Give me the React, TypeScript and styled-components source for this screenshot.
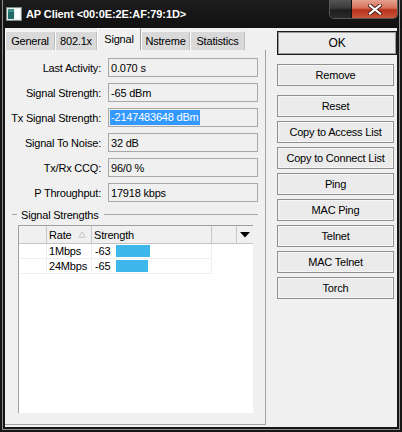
import React from "react";
import styled, { createGlobalStyle } from "styled-components";

const GlobalStyle = createGlobalStyle`
  html, body { margin: 0; padding: 0; background: #151515; }
  body { font-family: "Liberation Sans", Arial, sans-serif; font-size: 11px; color: #000; letter-spacing: -0.2px; }
  * { box-sizing: border-box; }
`;

const Window = styled.div`
  position: relative;
  width: 402px;
  height: 432px;
  background: #161616;
  display: flex;
  flex-direction: column;
  overflow: hidden;
  &::after {
    content: "";
    position: absolute;
    left: 2px;
    right: 2px;
    top: 0;
    bottom: 2px;
    border: 1px solid #8c8c8c;
    border-top: none;
    pointer-events: none;
  }
`;

const TitleBar = styled.div`
  height: 28px;
  flex: none;
  display: flex;
  align-items: flex-start;
  padding: 0 4px 0 6px;
  background: linear-gradient(#1c1c1c, #111111);
`;

const TitleLeft = styled.div`
  height: 28px;
  display: flex;
  align-items: center;
  gap: 4px;
`;

const TitleText = styled.span`
  color: #fff;
  font-weight: bold;
  font-size: 11px;
  letter-spacing: -0.1px;
`;

const Controls = styled.div`
  margin-left: auto;
  width: 69px;
  height: 19px;
  display: flex;
  border: 1px solid #5a5a5a;
  border-top: none;
  border-radius: 0 0 5px 5px;
  overflow: hidden;
`;

const CtrlDark = styled.div`
  width: 22px;
  background: linear-gradient(#555 0%, #3a3a3a 45%, #1e1e1e 55%, #2a2a2a 100%);
  border-right: 1px solid #111;
`;

const CtrlClose = styled.div`
  flex: 1;
  display: flex;
  align-items: center;
  justify-content: center;
  background: linear-gradient(#e6a291 0%, #d5705a 45%, #b8321c 55%, #c9553b 100%);
`;

const Client = styled.div`
  flex: 1;
  min-height: 0;
  margin: 0 5px 5px;
  background: #f0f0f0;
  display: flex;
`;

const LeftCol = styled.div`
  width: 262px;
  display: flex;
  flex-direction: column;
  padding-bottom: 2px;
`;

const TabStrip = styled.div`
  height: 22px;
  flex: none;
  display: flex;
  align-items: flex-end;
`;

const Tab = styled.div<{ $w: number; $active?: boolean }>`
  width: ${(p) => p.$w}px;
  height: ${(p) => (p.$active ? 22 : 19)}px;
  display: flex;
  align-items: center;
  justify-content: center;
  padding-bottom: ${(p) => (p.$active ? 2 : 0)}px;
  background: ${(p) => (p.$active ? "#f0f0f0" : "#d9d9d9")};
  border-top: 1px solid ${(p) => (p.$active ? "#ffffff" : "#f4f4f4")};
  border-left: 1px solid #ffffff;
  border-right: 1px solid ${(p) => (p.$active ? "#a0a0a0" : "#bdbdbd")};
  font-size: 11px;
  white-space: nowrap;
`;

const Panel = styled.div`
  flex: 1;
  display: flex;
  flex-direction: column;
  border-right: 1px solid #a0a0a0;
  border-bottom: 1px solid #a0a0a0;
  padding: 8px 0 11px 0;
  min-height: 0;
`;

const Fields = styled.div`
  display: flex;
  flex-direction: column;
  gap: 6px;
`;

const FieldRow = styled.div`
  display: grid;
  grid-template-columns: 96px 150px;
  column-gap: 7px;
  align-items: center;
  height: 19px;
`;

const Label = styled.span`
  text-align: right;
  white-space: nowrap;
`;

const Field = styled.div`
  height: 19px;
  border: 1px solid #a8a8a8;
  background: #f0f0f0;
  display: flex;
  align-items: center;
  padding: 0 1px;
  white-space: nowrap;
`;

const Value = styled.span`
  padding-left: 1px;
`;

const Selected = styled.span`
  background: #3399ff;
  color: #fff;
  line-height: 15px;
  padding: 0 1px;
`;

const GroupHeader = styled.div`
  margin-top: 6px;
  height: 13px;
  display: flex;
  align-items: center;
  padding: 0 7px 0 7px;
`;

const GroupLine = styled.div<{ $grow?: boolean }>`
  height: 1px;
  background: #a8a8a8;
  width: ${(p) => (p.$grow ? "auto" : "5px")};
  flex: ${(p) => (p.$grow ? 1 : "none")};
`;

const GroupTitle = styled.span`
  margin: 0 5px 0 4px;
  white-space: nowrap;
`;

const Table = styled.div`
  flex: 1;
  margin: 4px 12px 0 13px;
  background: #fff;
  border-left: 1px solid #a0a0a0;
  border-top: 1px solid #a0a0a0;
  display: flex;
  flex-direction: column;
`;

const HeaderRow = styled.div`
  display: grid;
  grid-template-columns: 28px 45px 120px 25px 1fr;
  height: 18px;
  background: #f0f0f0;
  border-bottom: 1px solid #c4c4c4;
`;

const HeadCell = styled.div<{ $last?: boolean }>`
  display: flex;
  align-items: center;
  justify-content: ${(p) => (p.$last ? "center" : "flex-start")};
  padding-left: ${(p) => (p.$last ? 0 : 2)}px;
  border-right: ${(p) => (p.$last ? "none" : "1px solid #c8c8c8")};
  gap: 7px;
  white-space: nowrap;
`;

const BodyRow = styled.div`
  display: grid;
  grid-template-columns: 28px 45px 120px 25px 1fr;
  height: 15px;
`;

const Cell = styled.div<{ $line?: boolean }>`
  display: flex;
  align-items: center;
  padding-left: 2px;
  border-right: ${(p) => (p.$line ? "1px solid #efefef" : "none")};
  border-bottom: ${(p) => (p.$line ? "1px solid #efefef" : "none")};
  white-space: nowrap;
`;

const Num = styled.span`
  width: 22px;
  padding-left: 1px;
`;

const Bar = styled.div`
  height: 12px;
  background: #3db7ec;
`;

const RightCol = styled.div`
  margin-left: 11px;
  padding-top: 3px;
  display: flex;
  flex-direction: column;
`;

const Button = styled.div<{ $top: number; $default?: boolean }>`
  margin-top: ${(p) => p.$top}px;
  width: ${(p) => (p.$default ? 120 : 117)}px;
  height: ${(p) => (p.$default ? 24 : 22)}px;
  display: flex;
  align-items: center;
  justify-content: center;
  background: #ebebeb;
  border: 1px solid ${(p) => (p.$default ? "#1a1a1a" : "#8f8f8f")};
  box-shadow: inset 0 0 0 1px ${(p) => (p.$default ? "#9a9a9a" : "#f6f6f6")};
  font-size: ${(p) => (p.$default ? 12 : 11)}px;
  white-space: nowrap;
`;

const tabs = [
  { name: "General", w: 50 },
  { name: "802.1x", w: 42 },
  { name: "Signal", w: 44, active: true },
  { name: "Nstreme", w: 49 },
  { name: "Statistics", w: 55 },
];

const fields = [
  { label: "Last Activity:", value: "0.070 s" },
  { label: "Signal Strength:", value: "-65 dBm" },
  { label: "Tx Signal Strength:", value: "-2147483648 dBm", selected: true },
  { label: "Signal To Noise:", value: "32 dB" },
  { label: "Tx/Rx CCQ:", value: "96/0 %" },
  { label: "P Throughput:", value: "17918 kbps" },
];

const strengths = [
  { rate: "1Mbps", value: -63 },
  { rate: "24Mbps", value: -65 },
];

const buttons = [
  { text: "Remove", top: 9 },
  { text: "Reset", top: 9 },
  { text: "Copy to Access List", top: 4 },
  { text: "Copy to Connect List", top: 4 },
  { text: "Ping", top: 4 },
  { text: "MAC Ping", top: 4 },
  { text: "Telnet", top: 4 },
  { text: "MAC Telnet", top: 4 },
  { text: "Torch", top: 4 },
];

const WindowIcon = () => (
  <svg width="16" height="14" viewBox="0 0 16 14">
    <rect x="0.5" y="0.5" width="15" height="13" fill="#e6ecec" stroke="#7d8a8a" />
    <rect x="2" y="2" width="6" height="10" fill="#1f6b68" />
    <rect x="2" y="2" width="6" height="3" fill="#3a8d88" />
    <rect x="9" y="2" width="5" height="10" fill="#ffffff" />
  </svg>
);

const CloseX = () => (
  <svg width="14" height="11" viewBox="0 0 14 11">
    <path d="M2 1.5 L12 9.5 M12 1.5 L2 9.5" stroke="#4a1a12" strokeWidth="4" strokeLinecap="square" />
    <path d="M2 1.5 L12 9.5 M12 1.5 L2 9.5" stroke="#ffffff" strokeWidth="2.2" strokeLinecap="square" />
  </svg>
);

const SortArrow = () => (
  <svg width="8" height="7" viewBox="0 0 8 7">
    <path d="M4 0.8 L7.2 6.2 L0.8 6.2 Z" fill="none" stroke="#c4c4c4" strokeWidth="1" />
  </svg>
);

const DropArrow = () => (
  <svg width="10" height="6" viewBox="0 0 10 6">
    <path d="M0 0 L10 0 L5 5.5 Z" fill="#000" />
  </svg>
);

export default function App() {
  return (
    <>
      <GlobalStyle />
      <Window>
        <TitleBar>
          <TitleLeft>
            <WindowIcon />
            <TitleText>AP Client &lt;00:0E:2E:AF:79:1D&gt;</TitleText>
          </TitleLeft>
          <Controls>
            <CtrlDark />
            <CtrlClose>
              <CloseX />
            </CtrlClose>
          </Controls>
        </TitleBar>
        <Client>
          <LeftCol>
            <TabStrip>
              {tabs.map((t) => (
                <Tab key={t.name} $w={t.w} $active={t.active}>
                  {t.name}
                </Tab>
              ))}
            </TabStrip>
            <Panel>
              <Fields>
                {fields.map((f) => (
                  <FieldRow key={f.label}>
                    <Label>{f.label}</Label>
                    <Field>{f.selected ? <Selected>{f.value}</Selected> : <Value>{f.value}</Value>}</Field>
                  </FieldRow>
                ))}
              </Fields>
              <GroupHeader>
                <GroupLine />
                <GroupTitle>Signal Strengths</GroupTitle>
                <GroupLine $grow />
              </GroupHeader>
              <Table>
                <HeaderRow>
                  <HeadCell />
                  <HeadCell>
                    Rate
                    <SortArrow />
                  </HeadCell>
                  <HeadCell>Strength</HeadCell>
                  <HeadCell />
                  <HeadCell $last>
                    <DropArrow />
                  </HeadCell>
                </HeaderRow>
                {strengths.map((s) => (
                  <BodyRow key={s.rate}>
                    <Cell $line />
                    <Cell $line>{s.rate}</Cell>
                    <Cell $line>
                      <Num>{s.value}</Num>
                      <Bar style={{ width: `${Math.round((100 + s.value) * 0.92)}px` }} />
                    </Cell>
                    <Cell />
                    <Cell />
                  </BodyRow>
                ))}
              </Table>
            </Panel>
          </LeftCol>
          <RightCol>
            <Button $top={0} $default>
              OK
            </Button>
            {buttons.map((b) => (
              <Button key={b.text} $top={b.top}>
                {b.text}
              </Button>
            ))}
          </RightCol>
        </Client>
      </Window>
    </>
  );
}
